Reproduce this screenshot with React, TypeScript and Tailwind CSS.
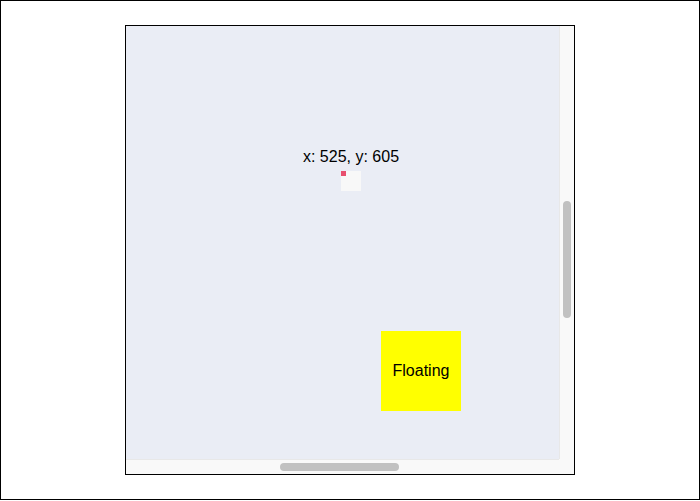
// Scroll viewport with drawn scrollbars (headless hides the native ones)

export default function App() {
  return (
    <div className="flex h-[500px] w-[700px] items-center justify-center border border-black bg-white font-['Liberation_Sans',Arial,sans-serif] text-black">
      <div className="grid h-[450px] w-[450px] grid-cols-[433px_15px] grid-rows-[433px_15px] border border-black bg-[#f9f9f9]">
        {/* Viewport */}
        <div className="relative overflow-hidden bg-[#eaedf5]">
          <div className="absolute left-[125px] top-[121px] flex w-[200px] flex-col items-center gap-1">
            <span className="text-base leading-[20px]">x: 525, y: 605</span>
            <div className="relative h-5 w-5 bg-[#f8f8f8]">
              <div className="absolute left-0 top-0 h-[5px] w-[5px] bg-[#e8506e]" />
            </div>
          </div>

          <div className="absolute left-[255px] top-[305px] flex h-20 w-20 items-center justify-center bg-[#ffff00] text-base">
            Floating
          </div>
        </div>

        {/* Vertical scrollbar */}
        <div className="border-l border-[#e8e8e8] bg-[#f9f9f9] pl-[3px] pt-[175px]">
          <div className="h-[117px] w-2 rounded-full bg-[#c1c1c1]" />
        </div>

        {/* Horizontal scrollbar */}
        <div className="border-t border-[#e8e8e8] bg-[#f9f9f9] pl-[154px] pt-[3px]">
          <div className="h-2 w-[119px] rounded-full bg-[#c1c1c1]" />
        </div>

        {/* Corner */}
        <div className="bg-[#f9f9f9]" />
      </div>
    </div>
  )
}
